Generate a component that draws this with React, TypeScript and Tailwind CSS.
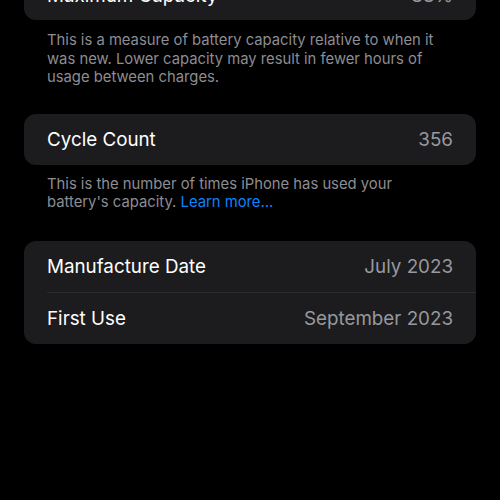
export default function App() {
  return (
    <div
      className="flex min-h-screen flex-col bg-black px-6 pb-10 text-white"
      style={{ fontFamily: "Inter, 'Noto Sans', sans-serif" }}
    >
      <div className="-mt-[31px]">
        <div className="rounded-xl bg-[#1c1c1e]">
          <Row label="Maximum Capacity" value="88%" />
        </div>
        <p className="pb-[27px] pl-[23px] pr-[36px] pt-[11px] text-[14.8px] leading-[18.5px] text-[#8d8d93]">
          This is a measure of battery capacity relative to when it was new.
          Lower capacity may result in fewer hours of usage between charges.
        </p>

        <div className="rounded-xl bg-[#1c1c1e]">
          <Row label="Cycle Count" value="356" />
        </div>
        <p className="pb-[29px] pl-[23px] pr-[36px] pt-[10px] text-[14.8px] leading-[18.5px] text-[#8d8d93]">
          This is the number of times iPhone has used your battery's capacity.{" "}
          <span className="text-[#0a84ff]">Learn more...</span>
        </p>

        <div className="rounded-xl bg-[#1c1c1e]">
          <Row label="Manufacture Date" value="July 2023" />
          <div className="ml-[23px] h-px bg-[#2a2a2c]" />
          <Row label="First Use" value="September 2023" />
        </div>
      </div>
    </div>
  );
}

function Row({ label, value }: { label: string; value: string }) {
  return (
    <div className="flex h-[51px] items-center justify-between px-[23px] pt-[3px] text-[18.8px]">
      <span className="text-white">{label}</span>
      <span className="text-[#98989f]">{value}</span>
    </div>
  );
}
